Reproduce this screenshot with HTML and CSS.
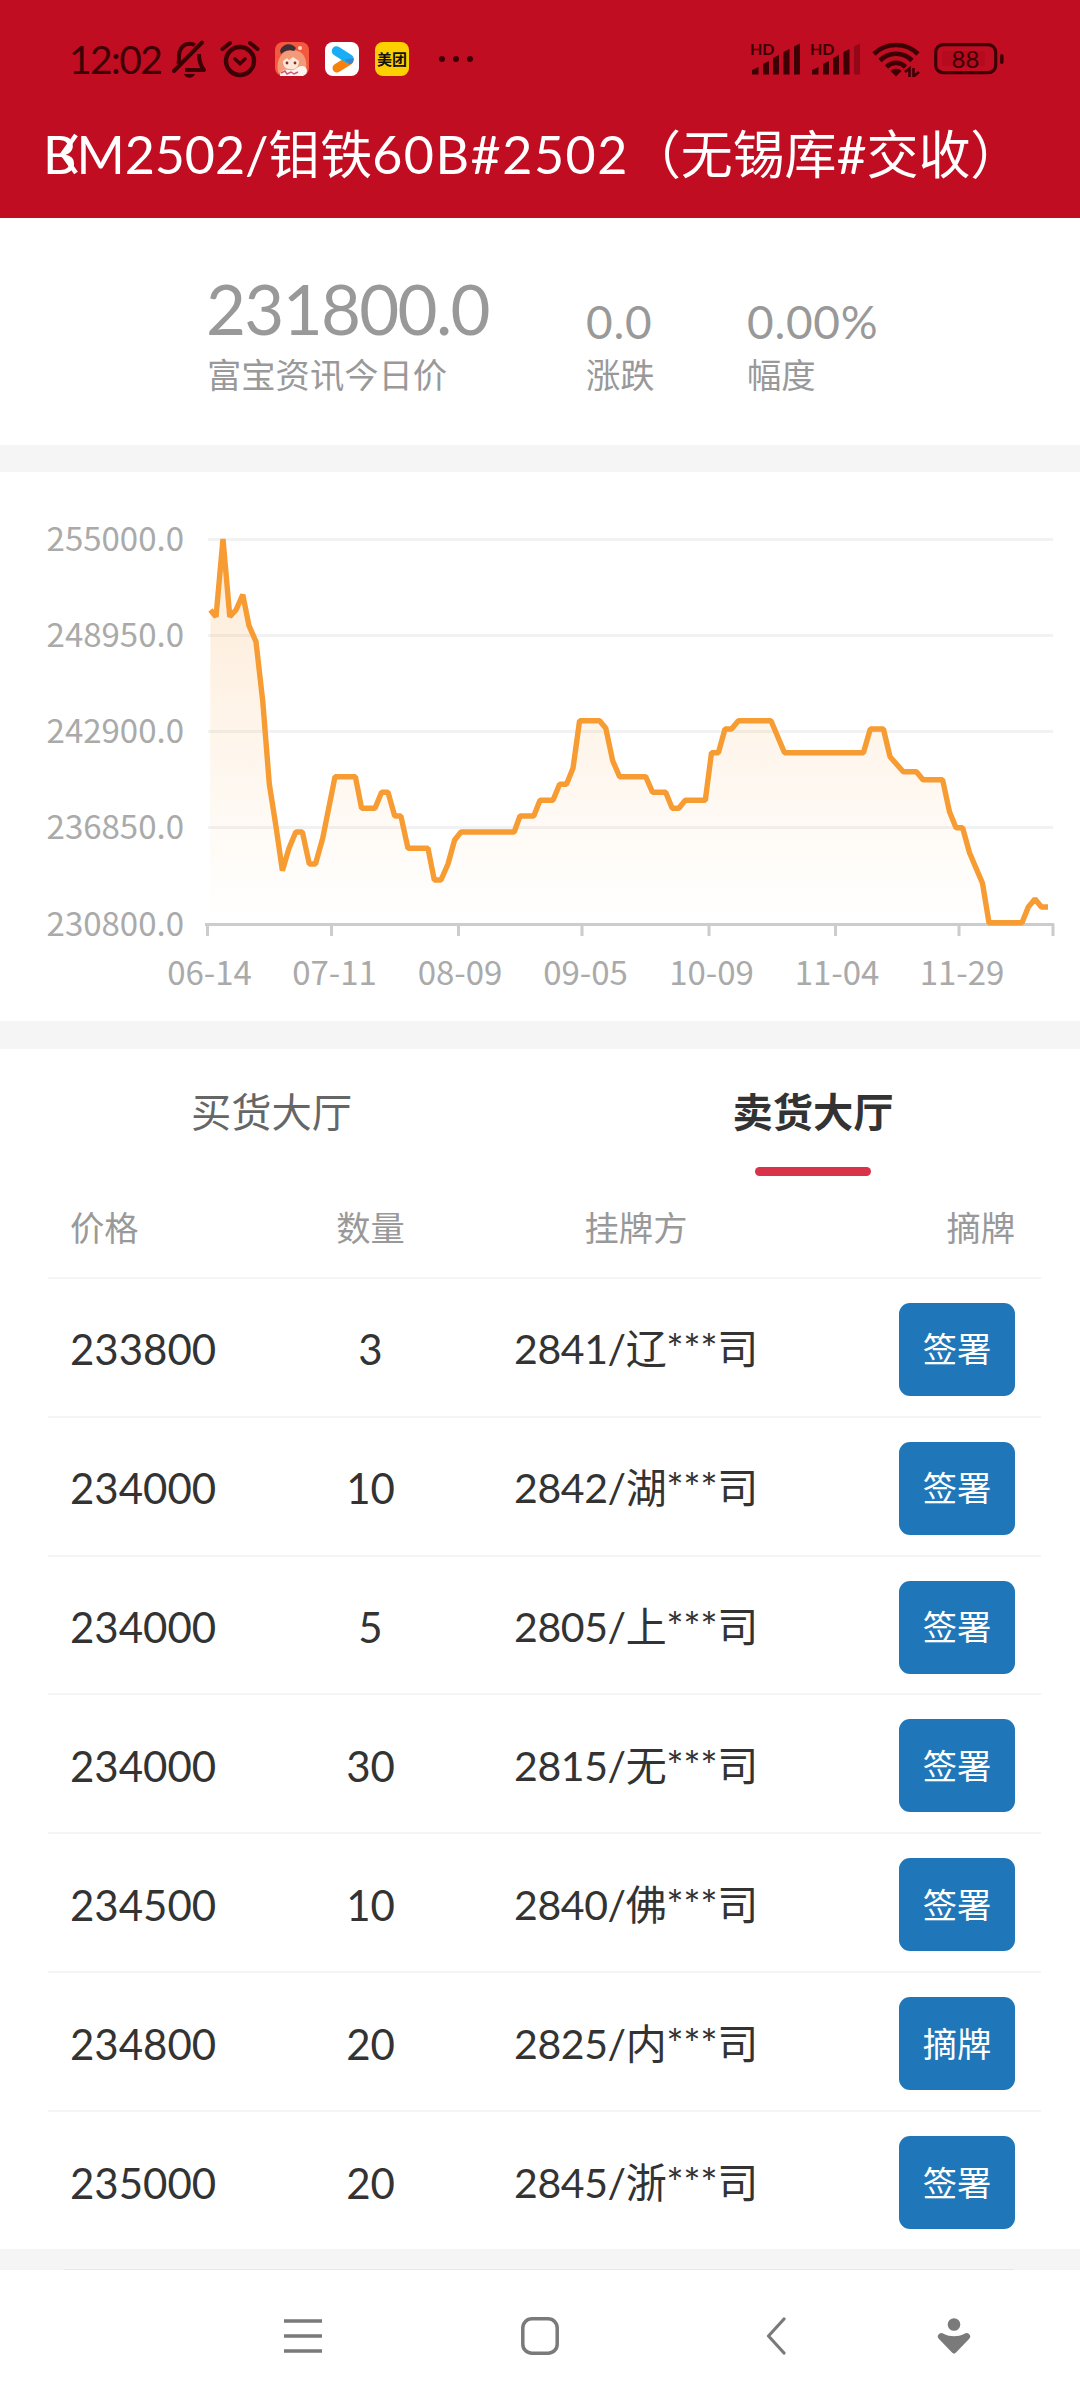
FILE: index.html
```html
<!DOCTYPE html>
<html lang="zh-CN">
<head>
    <meta charset="UTF-8">
    <meta name="viewport" content="width=device-width, initial-scale=1.0">
    <title>BM2502</title>
    <link rel="stylesheet" href="styles.css">
</head>
<body>
    <header class="header">
        <div class="status-bar">
            <span class="time">12:02</span>
            <svg class="icon-bell" width="36" height="38" viewBox="0 0 36 38">
                <path d="M7.500 24 C8.500 20 7.500 16 8.500 12 C11 4 18 2 24 5 M28 14 C28 20 29 25 33 30 H14" fill="none" stroke="#3d0005" stroke-width="4" stroke-linejoin="round"/>
                <path d="M3 31 L31 2.500" stroke="#3d0005" stroke-width="4" stroke-linecap="round"/>
                <path d="M13 34 H24 C22 39 15 39 13 34 Z" fill="#3d0005"/>
            </svg>
            <svg class="icon-alarm" width="40" height="38" viewBox="0 0 40 38">
                <circle cx="20" cy="21" r="14" fill="none" stroke="#3d0005" stroke-width="4.4"/>
                <path d="M2.500 9 L10 3 M37.500 9 L30 3" stroke="#3d0005" stroke-width="4" stroke-linecap="round"/>
                <path d="M15 19 L20 23.500 L25 19" fill="none" stroke="#3d0005" stroke-width="3.600" stroke-linecap="round"/>
            </svg>
            <svg class="app" width="34" height="34" viewBox="0 0 34 34">
                <rect width="34" height="34" rx="8" fill="#f4583f"/>
                <path d="M3 30 C1 20 5 9 16 8 C27 7 33 16 31 27 L29 33 H6 Z" fill="#f39a78"/>
                <path d="M5 9 C7 1 17 0 21 6 L19 9 C14 7 9 9 6 12 Z" fill="#3a3038"/>
                <path d="M8 19 L12 16 L14 18 L18 15 L24 19 C24 26 19 28 15 27 C10 27 8 24 8 19 Z" fill="#ffe6d8"/>
                <path d="M5 34 C5 28 10 27 14 28 C20 30 22 23 28 24 C32 25 33 29 31 32 L28 34 Z" fill="#fff3ef"/>
                <circle cx="12" cy="21" r="1.400" fill="#7a3426"/>
                <circle cx="20" cy="21" r="1.400" fill="#7a3426"/>
                <path d="M6 31 L10 29 L12 32 L16 30 L19 32 L23 30" fill="none" stroke="#c45b76" stroke-width="1.400"/>
                <circle cx="25" cy="6" r="2" fill="#ffd9c8"/>
            </svg>
            <svg class="app" width="34" height="34" viewBox="0 0 34 34">
                <rect width="34" height="34" rx="8" fill="#fff"/>
                <path d="M12 26 L24 18.500" stroke="#f6820d" stroke-width="9" stroke-linecap="round"/>
                <path d="M11.500 9 L24 17" stroke="#18adf5" stroke-width="9.500" stroke-linecap="round"/>
                <path d="M19.500 17.500 L24 17 L28.400 16 C29 20 27 21.500 25 22.500 Z" fill="#3f83c8"/>
            </svg>
            <span class="app meituan">美团</span>
            <svg class="icon-dots" width="36" height="8" viewBox="0 0 36 8">
                <g fill="#3d0005"><circle cx="4" cy="4" r="3"/><circle cx="18" cy="4" r="3"/><circle cx="32" cy="4" r="3"/></g>
            </svg>
            <div class="status-right">
                <svg class="icon-signal" width="52" height="52" viewBox="0 -8 52 52">
                    <text x="0" y="13.500" class="hd">HD</text>
                    <g fill="#3d0005">
                        <path d="M2 33.500 V29 L8.500 26 V33.500 Z"/>
                        <path d="M13 33.500 V23 L19 20 V33.500 Z"/>
                        <path d="M23 33.500 V17 L29 14 V33.500 Z"/>
                        <path d="M33.500 33.500 V11 L39.500 8 V33.500 Z"/>
                        <path d="M44 33.500 V5.500 L50 2.500 V33.500 Z"/>
                    </g>
                </svg>
                <svg class="icon-signal" width="52" height="52" viewBox="0 -8 52 52">
                    <text x="0" y="13.500" class="hd">HD</text>
                    <g fill="#3d0005">
                        <path d="M2 33.500 V29 L8.500 26 V33.500 Z"/>
                        <path d="M13 33.500 V23 L19 20 V33.500 Z"/>
                        <path d="M23 33.500 V17 L29 14 V33.500 Z"/>
                        <path d="M33.500 33.500 V11 L39.500 8 V33.500 Z"/>
                        <path d="M44 33.500 V5.500 L50 2.500 V33.500 Z" opacity=".35"/>
                    </g>
                </svg>
                <svg class="icon-wifi" width="48" height="36" viewBox="0 0 48 36">
                    <g fill="none" stroke="#3d0005" stroke-width="4.600">
                        <path d="M2 13 C14 1 34 1 46 13"/>
                        <path d="M8 19.500 C17 10.500 31 10.500 40 19.500"/>
                        <path d="M14.500 26 C20 20.500 28 20.500 33.500 26"/>
                    </g>
                    <path d="M18.500 30 C21 27 27 27 29.500 30 L24 35.500 Z" fill="#3d0005"/>
                    <path d="M33 31 L37.500 27.500 V36 M47 31 L41.500 35.500 V27" fill="none" stroke="#3d0005" stroke-width="2.600"/>
                </svg>
                <svg class="icon-battery" width="71" height="32" viewBox="0 0 71 32">
                    <rect x="1.700" y="1.700" width="60" height="28" rx="7.500" fill="none" stroke="#3d0005" stroke-width="3.200"/>
                    <rect x="8" y="8" width="43" height="15" fill="#3d0005" opacity=".08"/>
                    <rect x="66" y="11" width="3.600" height="10" rx="1.800" fill="#3d0005"/>
                    <text x="31.500" y="24.500" text-anchor="middle" class="battery-text">88</text>
                </svg>
            </div>
        </div>
        <div class="title-bar">
            <svg class="back" width="20" height="42" viewBox="0 0 20 42">
                <path d="M17 2 L3.500 21 L17 40" fill="none" stroke="#fff" stroke-width="4.500"/>
            </svg>
            <h1 class="title">BM2502/钼铁<span class="code">60B#2502</span>（无锡库#交收）</h1>
        </div>
    </header>

    <section class="summary">
        <div class="summary-item price">
            <span class="value big">231800.0</span>
            <span class="label">富宝资讯今日价</span>
        </div>
        <div class="summary-item change">
            <span class="value">0.0</span>
            <span class="label">涨跌</span>
        </div>
        <div class="summary-item">
            <span class="value">0.00%</span>
            <span class="label">幅度</span>
        </div>
    </section>

    <section class="chart">
        <svg width="1080" height="549" viewBox="0 0 1080 549">
            <defs>
                <linearGradient id="area" x1="0" y1="0" x2="0" y2="1">
                    <stop offset="0" stop-color="#f79b33" stop-opacity=".2"/>
                    <stop offset="1" stop-color="#f79b33" stop-opacity="0"/>
                </linearGradient>
            </defs>
            <!-- grid -->
            <g stroke="#f2f2f2" stroke-width="3">
                <path d="M208 67.500 H1053"/>
                <path d="M208 163.500 H1053"/>
                <path d="M208 259.500 H1053"/>
                <path d="M208 355.500 H1053"/>
            </g>
            <!-- axis -->
            <g stroke="#cccccc" stroke-width="3" fill="none">
                <path d="M205 452.500 H1054"/>
                <path d="M207.500 452 V464 M331.500 452 V464 M458.500 452 V464 M582 452 V464 M709 452 V464 M835.500 452 V464 M959 452 V464 M1053 452 V464"/>
            </g>
            <!-- price line -->
            <polygon fill="url(#area)" points="210,452 210.400,138 216,144.700 223,67 229.800,144.700 236,138 242.800,122.700 249,153.700 256,169.700 262.800,229.700 269.300,312 276,354.700 282.400,398.700 289,376.300 295.800,360 302.400,360 309.300,392 315.500,392 322.700,366.300 335,304.700 355.400,304.700 361.600,336.300 375,336.300 381.600,320.300 388,320.300 394.700,344 400.900,344 408,376.300 428,376.300 434.300,408 441,408 448,392 454.600,368 461,360 514.200,360 520,344 533.800,344 540,328.300 553,328.300 559.600,312.300 566.500,312.300 573,296.300 579.600,248.700 599.600,248.700 605.800,256.300 612.700,288.700 619.600,304.700 645.700,304.700 652.600,320.300 665.700,320.300 672.200,336.300 678.800,336.300 685.300,328.300 705.300,328.300 711.500,280.700 718.400,280.700 725,257 731.500,257 738.400,248.700 771,248.700 784.500,280.700 863.400,280.700 870.300,257 883.400,257 890,284.700 903.300,299.700 916.400,299.700 923,307.700 942.600,307.700 949.500,339.700 956,355.700 962.600,355.700 969.500,380.700 982.500,411.300 989,450.700 1022,450.700 1028.300,435 1035,427 1041.400,435 1048,435 1048,452"/>
            <polyline fill="none" stroke="#f79b33" stroke-width="5.400" stroke-linejoin="bevel" points="210.400,138 216,144.700 223,67 229.800,144.700 236,138 242.800,122.700 249,153.700 256,169.700 262.800,229.700 269.300,312 276,354.700 282.400,398.700 289,376.300 295.800,360 302.400,360 309.300,392 315.500,392 322.700,366.300 335,304.700 355.400,304.700 361.600,336.300 375,336.300 381.600,320.300 388,320.300 394.700,344 400.900,344 408,376.300 428,376.300 434.300,408 441,408 448,392 454.600,368 461,360 514.200,360 520,344 533.800,344 540,328.300 553,328.300 559.600,312.300 566.500,312.300 573,296.300 579.600,248.700 599.600,248.700 605.800,256.300 612.700,288.700 619.600,304.700 645.700,304.700 652.600,320.300 665.700,320.300 672.200,336.300 678.800,336.300 685.300,328.300 705.300,328.300 711.500,280.700 718.400,280.700 725,257 731.500,257 738.400,248.700 771,248.700 784.500,280.700 863.400,280.700 870.300,257 883.400,257 890,284.700 903.300,299.700 916.400,299.700 923,307.700 942.600,307.700 949.500,339.700 956,355.700 962.600,355.700 969.500,380.700 982.500,411.300 989,450.700 1022,450.700 1028.300,435 1035,427 1041.400,435 1048,435"/>
            <g class="axis-text" text-anchor="end">
                <text x="184" y="79">255000.0</text>
                <text x="184" y="175">248950.0</text>
                <text x="184" y="271">242900.0</text>
                <text x="184" y="367">236850.0</text>
                <text x="184" y="464">230800.0</text>
            </g>
            <g class="axis-text" text-anchor="middle">
                <text x="209.500" y="513">06-14</text>
                <text x="334.500" y="513">07-11</text>
                <text x="460" y="513">08-09</text>
                <text x="585.500" y="513">09-05</text>
                <text x="711.500" y="513">10-09</text>
                <text x="837" y="513">11-04</text>
                <text x="962" y="513">11-29</text>
            </g>
        </svg>
    </section>

    <section class="hall">
        <div class="tabs">
            <div class="tab">买货大厅</div>
            <div class="tab active">卖货大厅</div>
        </div>
        <div class="list">
            <div class="row head">
                <span>价格</span><span>数量</span><span>挂牌方</span><span>摘牌</span>
            </div>
            <div class="row">
                <span>233800</span><span>3</span><span class="seller">2841/辽***司</span><button class="btn">签署</button>
            </div>
            <div class="row">
                <span>234000</span><span>10</span><span class="seller">2842/湖***司</span><button class="btn">签署</button>
            </div>
            <div class="row">
                <span>234000</span><span>5</span><span class="seller">2805/上***司</span><button class="btn">签署</button>
            </div>
            <div class="row">
                <span>234000</span><span>30</span><span class="seller">2815/无***司</span><button class="btn">签署</button>
            </div>
            <div class="row">
                <span>234500</span><span>10</span><span class="seller">2840/佛***司</span><button class="btn">签署</button>
            </div>
            <div class="row">
                <span>234800</span><span>20</span><span class="seller">2825/内***司</span><button class="btn">摘牌</button>
            </div>
            <div class="row">
                <span>235000</span><span>20</span><span class="seller">2845/浙***司</span><button class="btn">签署</button>
            </div>
        </div>
    </section>

    <div class="divider"></div>

    <nav class="nav">
        <svg class="nav-menu" width="38" height="40" viewBox="0 0 38 40">
            <path d="M0 5 H38 M0 20 H38 M0 35 H38" stroke="#7a7a7a" stroke-width="3.500"/>
        </svg>
        <svg class="nav-home" width="38" height="40" viewBox="0 0 38 40">
            <rect x="1.800" y="2.800" width="34.400" height="34.400" rx="9" fill="none" stroke="#7a7a7a" stroke-width="3.500"/>
        </svg>
        <svg class="nav-back" width="20" height="40" viewBox="0 0 20 40">
            <path d="M18 3 L2.500 20 L18 37" fill="none" stroke="#7a7a7a" stroke-width="3.200" stroke-linejoin="round" stroke-linecap="round"/>
        </svg>
        <svg width="34" height="40" viewBox="0 0 34 40">
            <circle cx="17" cy="8.500" r="6.300" fill="#7a7a7a"/>
            <path d="M2 18 C4 16.500 5 17 7 18 C13 21 21 21 27 18 C29 17 30 16.500 32 18 C34 20 33.500 21.500 32 23 L19 36.500 C17.500 38 16.500 38 15 36.500 L2 23 C0.500 21.500 0 20 2 18 Z" fill="#7a7a7a"/>
        </svg>
    </nav>
</body>
</html>
```
FILE: styles.css
```css
* {
    box-sizing: border-box;
}

body {
    margin: 0;
    width: 1080px;
    height: 2400px;
    display: flex;
    flex-direction: column;
    font-family: Lato, "Noto Sans CJK SC", sans-serif;
    font-variant-ligatures: none;
    background-color: #f5f5f5;
    color: #333333;
}

svg {
    display: block;
    flex-shrink: 0;
}

/* header */
.header {
    height: 218px;
    background-color: #c10d22;
}

.status-bar {
    height: 118px;
    padding: 0 75px 0 69px;
    display: flex;
    align-items: center;
    color: #3d0005;
}

.time {
    width: 102px;
    font-size: 39px;
    line-height: 40px;
    letter-spacing: -1.6px;
}

.icon-alarm {
    margin-left: 13px;
}

.app {
    width: 34px;
    height: 34px;
    margin-left: 16px;
}

.icon-alarm + .app {
    margin-left: 15px;
}

.meituan {
    border-radius: 8px;
    background-color: #ffd000;
    color: #111111;
    font-size: 15px;
    font-weight: 700;
    line-height: 34px;
    text-align: center;
}

.icon-dots {
    margin-left: 29px;
}

.status-right {
    margin-left: auto;
    display: flex;
    align-items: center;
}

.icon-signal {
    margin-right: 8px;
}

.icon-wifi {
    margin-left: 2px;
    margin-right: 14px;
}

.hd {
    font-size: 16px;
    font-weight: 700;
    fill: #3d0005;
}

.battery-text {
    font-size: 24px;
    fill: #3d0005;
}

.title-bar {
    position: relative;
    height: 76px;
    padding-left: 43px;
}

.title {
    margin: 0;
    font-size: 52px;
    font-weight: 400;
    line-height: 73px;
    letter-spacing: -0.1px;
    white-space: nowrap;
    color: #ffffff;
}

.code {
    letter-spacing: 1.5px;
}

/* the back arrow sits over the long title */
.back {
    position: absolute;
    left: 59px;
    top: 15px;
}

/* summary */
.summary {
    height: 227px;
    padding: 54px 0 0 207px;
    display: flex;
    background-color: #ffffff;
    color: #999999;
}

.summary-item {
    display: flex;
    flex-direction: column;
}

.price {
    width: 379px;
}

.change {
    width: 161px;
}

.value {
    height: 78px;
    font-size: 46px;
    line-height: 100px;
    letter-spacing: 0.7px;
}

.big {
    font-size: 69px;
    line-height: 73px;
    letter-spacing: -1.7px;
    text-indent: -1px;
}

.label {
    font-size: 34.3px;
    line-height: 50px;
}

/* chart */
.chart {
    height: 549px;
    margin-top: 27px;
    background-color: #ffffff;
}

.axis-text {
    font-family: "Noto Sans CJK SC", sans-serif;
    font-size: 33px;
    fill: #aaaaaa;
}

/* hall */
.hall {
    height: 1201px;
    margin-top: 28px;
    background-color: #ffffff;
}

.tabs {
    height: 127px;
    display: flex;
}

.tab {
    position: relative;
    flex: none;
    width: 543px;
    font-size: 40.3px;
    line-height: 125px;
    text-align: center;
    color: #666666;
}

.tab.active {
    width: 540px;
    font-weight: 700;
    color: #333333;
}

.tab.active::after {
    content: "";
    position: absolute;
    left: 212px;
    bottom: 0;
    width: 116px;
    height: 9px;
    border-radius: 5px;
    background-color: #d9334a;
}

.list {
    padding: 0 39px 0 48px;
}

.row {
    height: 138.9px;
    padding: 4px 26px 0 22px;
    display: grid;
    grid-template-columns: 219px 163px 368px 1fr;
    align-items: center;
    text-align: center;
    font-size: 42px;
    line-height: 60px;
    border-top: 2px solid #f5f5f5;
}

.row > :first-child {
    text-align: left;
}

.row > :last-child {
    justify-self: end;
}

.row.head {
    height: 101px;
    padding-top: 3px;
    font-size: 34.3px;
    border-top: none;
    color: #999999;
}

.seller {
    font-size: 41px;
    letter-spacing: -0.4px;
}

.btn {
    width: 116px;
    height: 93px;
    padding: 0 0 4px;
    border: none;
    border-radius: 11px;
    background-color: #1f77ba;
    color: #ffffff;
    font-family: inherit;
    font-size: 34.3px;
}

.divider {
    height: 22px;
    margin: 0 66px 0 64px;
    border-bottom: 2px solid #e8e8e8;
}

/* nav */
.nav {
    height: 130px;
    margin-top: -1px;
    padding: 1px 0 0 284px;
    display: flex;
    align-items: center;
    background-color: #ffffff;
}

.nav-menu {
    margin-right: 199px;
}

.nav-home {
    margin-right: 207px;
}

.nav-back {
    margin-right: 151px;
}
```
